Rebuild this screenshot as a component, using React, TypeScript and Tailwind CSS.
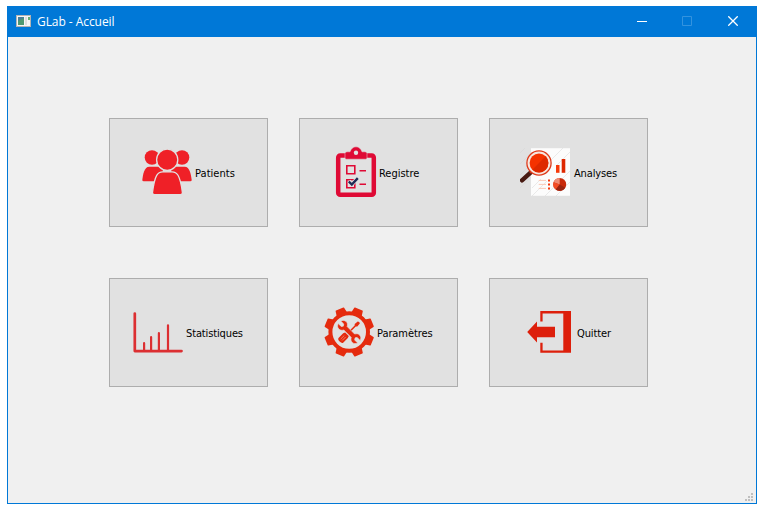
import type { ReactNode } from 'react';

function PatientsIcon() {
  return (
    <svg width="50" height="50" viewBox="0 0 50 50" fill="#ef2027" className="shrink-0">
      <circle cx="10" cy="9.500" r="7.300" />
      <circle cx="40" cy="9.500" r="7.300" />
      <path d="M.3 32c.7-6 2-13.300 7-13.300h9q3 0 4.500 3v11.600H1.700Q.3 33.300.3 32z" />
      <path d="M49.700 32c-.7-6-2-13.300-7-13.300h-9q-3 0-4.500 3v11.600h19.100q1.400 0 1.400-1.300z" />
      <circle cx="25.200" cy="11.700" r="10.600" stroke="#e1e1e1" strokeWidth="1.300" />
      <path
        d="M10.500 44.300c.8-6 2-13.200 4.200-17q2-3.500 6-3.500h9.300q4 0 6 3.500c2.200 3.800 3.600 11 4.400 17q.2 2.300-2 2.300H12.500q-2.200 0-2-2.300z"
        stroke="#e1e1e1"
        strokeWidth="1.300"
      />
    </svg>
  );
}

function RegistreIcon() {
  return (
    <svg width="40" height="50" viewBox="0 0 40 50" fill="none" className="shrink-0 overflow-visible">
      <rect x="2.200" y="7.500" width="35.600" height="39.200" rx="2" stroke="#df0a35" strokeWidth="4.500" />
      <path
        d="M9 10V5.500Q9 3.800 11 3.800h3C15 .8 17-1.200 20-1.200s5 2 6 5h3q2 0 2 1.700V10q0 1.200-1.500 1.200h-19Q9 11.200 9 10z"
        fill="#df0a35"
        stroke="#e1e1e1"
        strokeWidth=".5"
      />
      <circle cx="20" cy="4.700" r="2.200" fill="#e1e1e1" />
      <path d="M10.800 17.800h8v8h-8zM10.800 31.800h8v8h-8z" stroke="#df0a35" strokeWidth="1.600" />
      <path d="M23.500 22.700H30M23.500 36.200H30" stroke="#df0a35" strokeWidth="1.500" />
      <path d="M13 33.200l3 3 5.800-6" stroke="#e1e1e1" strokeWidth="4" />
      <path d="M12.800 33.500l3 3 6-6.300" stroke="#1f2b56" strokeWidth="2.400" />
    </svg>
  );
}

function AnalysesIcon() {
  return (
    <svg width="50" height="50" viewBox="0 0 50 50" fill="none" className="shrink-0">
      <path d="M11 .3h39v47.500H11z" fill="#fcfcfc" />
      <path
        d="M0 5l5-5M0 16L12 4M0 27l8-8M0 40L11 29M12 40l9-9M12 48l15-15M25 48L50 23M36 48l14-14M28 15L43 0M36 18L50 4"
        stroke="#d2d2d2"
        strokeWidth=".7"
        opacity=".65"
      />
      <path d="M10.800 24.300L2 32.300" stroke="#481a12" strokeWidth="4.400" strokeLinecap="round" />
      <path d="M13.500 21.500l-3.500 3.500" stroke="#b73118" strokeWidth="2.200" />
      <circle cx="19" cy="15" r="12.100" fill="#f6e7df" stroke="#df3b1c" strokeWidth="1.300" />
      <circle cx="19" cy="15" r="9.400" fill="#f53200" />
      <path d="M25.650 8.350A9.400 9.400 0 0112.350 21.650z" fill="#de2900" />
      <path d="M36 17h3.500v7.800H36z" fill="#f63a0a" />
      <path d="M41.700 11h3.600v13.800h-3.600z" fill="#de2800" />
      <path d="M18.700 32.400H26M18.700 36.400H26M18.700 40.400H26" stroke="#fbc8b6" strokeWidth="1" />
      <path d="M28 31.500h2v2h-2zM28 35.500h2v2h-2zM28 39.500h2v2h-2z" fill="#f5380d" />
      <circle cx="39.700" cy="36.400" r="6.500" fill="#c82a0b" />
      <path d="M39.700 36.400V29.900a6.500 6.500 0 00-6.100 4.300z" fill="#ef8b74" />
      <path d="M39.700 36.400l-6.100-2.200a6.500 6.500 0 002.200 7.300z" fill="#f34c24" />
      <path d="M39.700 36.400l5.600 3.300a6.500 6.500 0 01-9.500 1.800z" fill="#9a2411" />
    </svg>
  );
}

function StatistiquesIcon() {
  return (
    <svg width="50" height="50" viewBox="0 0 50 50" fill="none" stroke="#dc2f32" strokeLinecap="round" className="shrink-0">
      <path d="M1.800 5.500V43.100H48.500" strokeWidth="2.700" strokeLinejoin="round" />
      <path d="M11.100 35.200V43M18.100 29.200V43M25.900 25.200V43M35 17.300V43" strokeWidth="2.200" />
    </svg>
  );
}

const teeth = [22.5, 67.5, 112.5, 157.5, 202.5, 247.5, 292.5, 337.5];

function ParametresIcon() {
  return (
    <svg width="50" height="50" viewBox="0 0 50 50" fill="none" className="shrink-0 overflow-visible">
      <g transform="translate(25.2 24)">
        {teeth.map((angle) => (
          <path key={angle} d="M-5.800-18l1.200-6.400q.1-.5.700-.5h7.800q.6 0 .7.500L5.800-18z" fill="#e52b0e" transform={`rotate(${angle})`} />
        ))}
        <circle r="18.800" stroke="#e52b0e" strokeWidth="4" />
        <g transform="rotate(45)">
          <path d="M-1.500-13.500l1.500-.7 1.500.7.300 3.900-1 1.100V0H-.8v-8.500l-1-1.100z" fill="#e52b0e" />
          <path d="M-2.600 3.200h5.200l.7 2v6.300q0 2-3.300 2t-3.300-2V5.200z" fill="#e52b0e" />
          <path d="M-1 6v5M1 6v5" stroke="#f4aa98" strokeWidth=".6" />
        </g>
        <path
          d="M-1.800-13.800v4.300L0-8.300l1.800-1.200v-4.300c2.100.8 3.400 2.300 3.400 4.300 0 2-1 3.300-2.800 4.200v10.600c1.800.9 2.800 2.200 2.800 4.200 0 2-1.300 3.500-3.400 4.300V9.500L0 8.300-1.800 9.500v4.300c-2.100-.8-3.400-2.300-3.400-4.300 0-2 1-3.300 2.800-4.200V-5.300c-1.800-.9-2.800-2.200-2.800-4.200 0-2 1.300-3.500 3.400-4.300z"
          transform="rotate(-45)"
          fill="#e52b0e"
          stroke="#e1e1e1"
          strokeWidth=".6"
        />
      </g>
    </svg>
  );
}

function QuitterIcon() {
  return (
    <svg width="44" height="50" viewBox="0 0 44 50" fill="#dd1f0b" className="shrink-0">
      <path d="M13.300 3H44v41.800H13.300V34.700h2.300v7.700h20.700V5.400H15.600v8h-2.300z" />
      <path d="M.2 24L10 13.500v5.200h18v10.500H10v5.300z" />
    </svg>
  );
}

function MenuButton({ label, icon, className }: { label: string; icon: ReactNode; className: string }) {
  return (
    <button
      type="button"
      className={`flex h-[109px] w-[159px] items-start border border-[#adadad] bg-[#e1e1e1] pt-[29px] ${className}`}
    >
      {icon}
      <span className="flex h-[52px] items-center whitespace-nowrap">{label}</span>
    </button>
  );
}

export default function App() {
  return (
    <div className="h-[510px] w-[765px] bg-white pt-[6px] pl-[7px]">
      <div className="flex h-[498px] w-[750px] flex-col border border-[#0078d7] bg-[#f0f0f0]">
        <header className="flex h-[30px] shrink-0 items-center bg-[#0078d7] pl-2 text-white">
          <svg width="15" height="12" viewBox="0 0 15 12" className="mb-[2px]">
            <path d="M0 0h15v12H0z" fill="#b4b4b4" />
            <path d="M1 1h13v10H1z" fill="#f5f5f5" />
            <path d="M2 2h6v8H2z" fill="#497f97" />
            <path d="M2 6l6-3v7H2z" fill="#4d9871" />
            <path d="M9 2h2v8H9z" fill="#dedede" />
            <path d="M12 2h2v3h-2z" fill="#67ad73" />
          </svg>
          <h1 className="ml-[6px] flex-1 font-['Open_Sans','Noto_Sans',sans-serif] text-[12px] leading-4 tracking-[-0.06px]">GLab - Accueil</h1>
          <svg width="10" height="10" viewBox="0 0 10 10" className="mr-[35px] mb-[2px]">
            <path d="M0 5h10v1H0z" fill="#fff" />
          </svg>
          <svg width="10" height="10" viewBox="0 0 10 10" className="mr-[36px] mb-[2px]">
            <path d="M.5.5h9v9h-9z" fill="none" stroke="#3393df" />
          </svg>
          <svg width="10" height="10" viewBox="0 0 10 10" className="mr-[18px] mb-[2px]">
            <path d="M.3.3l9.400 9.400M9.700.3L.3 9.700" stroke="#fff" strokeWidth="1.300" />
          </svg>
        </header>
        <main className="grid flex-1 grid-cols-[repeat(3,159px)] content-start gap-x-[31px] gap-y-[51px] pt-[81px] pl-[101px] font-['DejaVu_Sans_Condensed','DejaVu_Sans',sans-serif] text-[11px] text-black">
          <MenuButton label="Patients" icon={<PatientsIcon />} className="gap-[3px] pl-[32px] tracking-[0.05px]" />
          <MenuButton label="Registre" icon={<RegistreIcon />} className="gap-[3px] pl-[36px] tracking-[-0.02px]" />
          <MenuButton label="Analyses" icon={<AnalysesIcon />} className="gap-[4px] pl-[30px] tracking-[-0.15px]" />
          <MenuButton label="Statistiques" icon={<StatistiquesIcon />} className="gap-[3px] pl-[23px] tracking-[-0.13px]" />
          <MenuButton label="Paramètres" icon={<ParametresIcon />} className="gap-[3px] pl-[24px] tracking-[-0.08px]" />
          <MenuButton label="Quitter" icon={<QuitterIcon />} className="gap-[6px] pl-[37px] tracking-[-0.1px]" />
        </main>
        <footer className="flex justify-end pr-[3px] pb-[2px]">
          <svg width="8" height="8" viewBox="0 0 8 8" fill="#bfbfbf">
            <path d="M6 0h2v2H6zM3 3h2v2H3zM6 3h2v2H6zM0 6h2v2H0zM3 6h2v2H3zM6 6h2v2H6z" />
          </svg>
        </footer>
      </div>
    </div>
  );
}
